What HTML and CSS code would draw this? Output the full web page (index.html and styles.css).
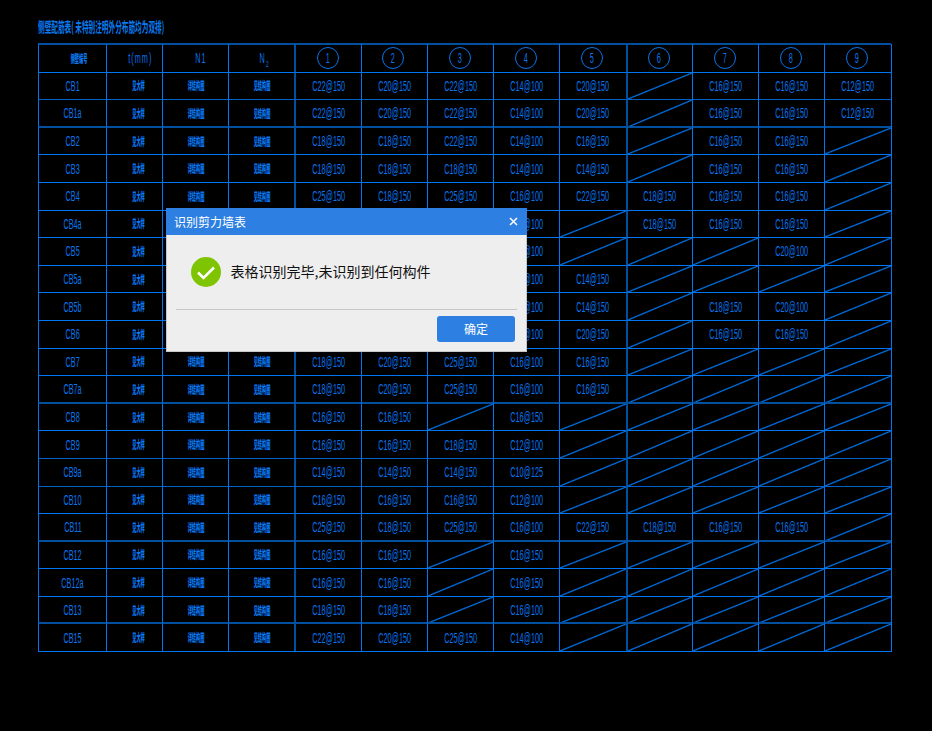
FILE: index.html
```html
<!DOCTYPE html>
<html lang="zh">
<head>
<meta charset="utf-8">
<title>识别剪力墙表</title>
<link rel="stylesheet" href="styles.css">
</head>
<body>
<main class="sheet">
<h1 class="title">侧壁配筋表( 未特别注明外分布筋均为双排)</h1>
<div class="grid">
<div class="row dim"><div class="c"><span class="m head">侧壁编号</span></div><div class="c"><span class="r wide t">t(mm)</span></div><div class="c"><span class="r wide n1">N1</span></div><div class="c"><span class="r wide n2">N<sub>2</sub></span></div><div class="c"><span class="o"><span class="r">1</span></span></div><div class="c"><span class="o"><span class="r">2</span></span></div><div class="c"><span class="o"><span class="r">3</span></span></div><div class="c"><span class="o"><span class="r">4</span></span></div><div class="c"><span class="o"><span class="r">5</span></span></div><div class="c"><span class="o"><span class="r">6</span></span></div><div class="c"><span class="o"><span class="r">7</span></span></div><div class="c"><span class="o"><span class="r">8</span></span></div><div class="c"><span class="o"><span class="r">9</span></span></div></div>
<div class="row"><div class="c"><span class="r">CB1</span></div><div class="c"><span class="m">见大样</span></div><div class="c"><span class="m">详结构图</span></div><div class="c"><span class="m">见结构图</span></div><div class="c"><span class="r">C22@150</span></div><div class="c"><span class="r">C20@150</span></div><div class="c"><span class="r">C22@150</span></div><div class="c"><span class="r">C14@100</span></div><div class="c"><span class="r">C20@150</span></div><div class="c x"></div><div class="c"><span class="r">C16@150</span></div><div class="c"><span class="r">C16@150</span></div><div class="c"><span class="r">C12@150</span></div></div>
<div class="row soft"><div class="c"><span class="r">CB1a</span></div><div class="c"><span class="m">见大样</span></div><div class="c"><span class="m">详结构图</span></div><div class="c"><span class="m">见结构图</span></div><div class="c"><span class="r">C22@150</span></div><div class="c"><span class="r">C20@150</span></div><div class="c"><span class="r">C22@150</span></div><div class="c"><span class="r">C14@100</span></div><div class="c"><span class="r">C20@150</span></div><div class="c x"></div><div class="c"><span class="r">C16@150</span></div><div class="c"><span class="r">C16@150</span></div><div class="c"><span class="r">C12@150</span></div></div>
<div class="row dim"><div class="c"><span class="r">CB2</span></div><div class="c"><span class="m">见大样</span></div><div class="c"><span class="m">详结构图</span></div><div class="c"><span class="m">见结构图</span></div><div class="c"><span class="r">C18@150</span></div><div class="c"><span class="r">C18@150</span></div><div class="c"><span class="r">C22@150</span></div><div class="c"><span class="r">C14@100</span></div><div class="c"><span class="r">C16@150</span></div><div class="c x"></div><div class="c"><span class="r">C16@150</span></div><div class="c"><span class="r">C16@150</span></div><div class="c x"></div></div>
<div class="row"><div class="c"><span class="r">CB3</span></div><div class="c"><span class="m">见大样</span></div><div class="c"><span class="m">详结构图</span></div><div class="c"><span class="m">见结构图</span></div><div class="c"><span class="r">C18@150</span></div><div class="c"><span class="r">C18@150</span></div><div class="c"><span class="r">C18@150</span></div><div class="c"><span class="r">C14@100</span></div><div class="c"><span class="r">C14@150</span></div><div class="c x"></div><div class="c"><span class="r">C16@150</span></div><div class="c"><span class="r">C16@150</span></div><div class="c x"></div></div>
<div class="row"><div class="c"><span class="r">CB4</span></div><div class="c"><span class="m">见大样</span></div><div class="c"><span class="m">详结构图</span></div><div class="c"><span class="m">见结构图</span></div><div class="c"><span class="r">C25@150</span></div><div class="c"><span class="r">C18@150</span></div><div class="c"><span class="r">C25@150</span></div><div class="c"><span class="r">C16@100</span></div><div class="c"><span class="r">C22@150</span></div><div class="c"><span class="r">C18@150</span></div><div class="c"><span class="r">C16@150</span></div><div class="c"><span class="r">C16@150</span></div><div class="c x"></div></div>
<div class="row"><div class="c"><span class="r">CB4a</span></div><div class="c"><span class="m">见大样</span></div><div class="c"></div><div class="c"></div><div class="c"></div><div class="c"></div><div class="c"></div><div class="c"><span class="r">C16@100</span></div><div class="c x"></div><div class="c"><span class="r">C18@150</span></div><div class="c"><span class="r">C16@150</span></div><div class="c"><span class="r">C16@150</span></div><div class="c x"></div></div>
<div class="row"><div class="c"><span class="r">CB5</span></div><div class="c"><span class="m">见大样</span></div><div class="c"></div><div class="c"></div><div class="c"></div><div class="c"></div><div class="c"></div><div class="c"><span class="r">C16@100</span></div><div class="c x"></div><div class="c x"></div><div class="c x"></div><div class="c"><span class="r">C20@100</span></div><div class="c x"></div></div>
<div class="row"><div class="c"><span class="r">CB5a</span></div><div class="c"><span class="m">见大样</span></div><div class="c"></div><div class="c"></div><div class="c"></div><div class="c"></div><div class="c"></div><div class="c"><span class="r">C16@100</span></div><div class="c"><span class="r">C14@150</span></div><div class="c x"></div><div class="c x"></div><div class="c x"></div><div class="c x"></div></div>
<div class="row"><div class="c"><span class="r">CB5b</span></div><div class="c"><span class="m">见大样</span></div><div class="c"></div><div class="c"></div><div class="c"></div><div class="c"></div><div class="c"></div><div class="c"><span class="r">C16@100</span></div><div class="c"><span class="r">C14@150</span></div><div class="c x"></div><div class="c"><span class="r">C18@150</span></div><div class="c"><span class="r">C20@100</span></div><div class="c x"></div></div>
<div class="row"><div class="c"><span class="r">CB6</span></div><div class="c"><span class="m">见大样</span></div><div class="c"></div><div class="c"></div><div class="c"></div><div class="c"></div><div class="c"></div><div class="c"><span class="r">C16@100</span></div><div class="c"><span class="r">C20@150</span></div><div class="c x"></div><div class="c"><span class="r">C16@150</span></div><div class="c"><span class="r">C16@150</span></div><div class="c x"></div></div>
<div class="row"><div class="c"><span class="r">CB7</span></div><div class="c"><span class="m">见大样</span></div><div class="c"><span class="m">详结构图</span></div><div class="c"><span class="m">见结构图</span></div><div class="c"><span class="r">C18@150</span></div><div class="c"><span class="r">C20@150</span></div><div class="c"><span class="r">C25@150</span></div><div class="c"><span class="r">C16@100</span></div><div class="c"><span class="r">C16@150</span></div><div class="c x"></div><div class="c x"></div><div class="c x"></div><div class="c x"></div></div>
<div class="row"><div class="c"><span class="r">CB7a</span></div><div class="c"><span class="m">见大样</span></div><div class="c"><span class="m">详结构图</span></div><div class="c"><span class="m">见结构图</span></div><div class="c"><span class="r">C18@150</span></div><div class="c"><span class="r">C20@150</span></div><div class="c"><span class="r">C25@150</span></div><div class="c"><span class="r">C16@100</span></div><div class="c"><span class="r">C16@150</span></div><div class="c x"></div><div class="c x"></div><div class="c x"></div><div class="c x"></div></div>
<div class="row dim"><div class="c"><span class="r">CB8</span></div><div class="c"><span class="m">见大样</span></div><div class="c"><span class="m">详结构图</span></div><div class="c"><span class="m">见结构图</span></div><div class="c"><span class="r">C16@150</span></div><div class="c"><span class="r">C16@150</span></div><div class="c x"></div><div class="c"><span class="r">C16@150</span></div><div class="c x"></div><div class="c x"></div><div class="c x"></div><div class="c x"></div><div class="c x"></div></div>
<div class="row"><div class="c"><span class="r">CB9</span></div><div class="c"><span class="m">见大样</span></div><div class="c"><span class="m">详结构图</span></div><div class="c"><span class="m">见结构图</span></div><div class="c"><span class="r">C16@150</span></div><div class="c"><span class="r">C16@150</span></div><div class="c"><span class="r">C18@150</span></div><div class="c"><span class="r">C12@100</span></div><div class="c x"></div><div class="c x"></div><div class="c x"></div><div class="c x"></div><div class="c x"></div></div>
<div class="row soft"><div class="c"><span class="r">CB9a</span></div><div class="c"><span class="m">见大样</span></div><div class="c"><span class="m">详结构图</span></div><div class="c"><span class="m">见结构图</span></div><div class="c"><span class="r">C14@150</span></div><div class="c"><span class="r">C14@150</span></div><div class="c"><span class="r">C14@150</span></div><div class="c"><span class="r">C10@125</span></div><div class="c x"></div><div class="c x"></div><div class="c x"></div><div class="c x"></div><div class="c x"></div></div>
<div class="row soft"><div class="c"><span class="r">CB10</span></div><div class="c"><span class="m">见大样</span></div><div class="c"><span class="m">详结构图</span></div><div class="c"><span class="m">见结构图</span></div><div class="c"><span class="r">C16@150</span></div><div class="c"><span class="r">C16@150</span></div><div class="c"><span class="r">C16@150</span></div><div class="c"><span class="r">C12@100</span></div><div class="c x"></div><div class="c x"></div><div class="c x"></div><div class="c x"></div><div class="c x"></div></div>
<div class="row"><div class="c"><span class="r">CB11</span></div><div class="c"><span class="m">见大样</span></div><div class="c"><span class="m">详结构图</span></div><div class="c"><span class="m">见结构图</span></div><div class="c"><span class="r">C25@150</span></div><div class="c"><span class="r">C18@150</span></div><div class="c"><span class="r">C25@150</span></div><div class="c"><span class="r">C16@100</span></div><div class="c"><span class="r">C22@150</span></div><div class="c"><span class="r">C18@150</span></div><div class="c"><span class="r">C16@150</span></div><div class="c"><span class="r">C16@150</span></div><div class="c x"></div></div>
<div class="row dim"><div class="c"><span class="r">CB12</span></div><div class="c"><span class="m">见大样</span></div><div class="c"><span class="m">详结构图</span></div><div class="c"><span class="m">见结构图</span></div><div class="c"><span class="r">C16@150</span></div><div class="c"><span class="r">C16@150</span></div><div class="c x"></div><div class="c"><span class="r">C16@150</span></div><div class="c x"></div><div class="c x"></div><div class="c x"></div><div class="c x"></div><div class="c x"></div></div>
<div class="row"><div class="c"><span class="r">CB12a</span></div><div class="c"><span class="m">见大样</span></div><div class="c"><span class="m">详结构图</span></div><div class="c"><span class="m">见结构图</span></div><div class="c"><span class="r">C16@150</span></div><div class="c"><span class="r">C16@150</span></div><div class="c x"></div><div class="c"><span class="r">C16@150</span></div><div class="c x"></div><div class="c x"></div><div class="c x"></div><div class="c x"></div><div class="c x"></div></div>
<div class="row"><div class="c"><span class="r">CB13</span></div><div class="c"><span class="m">见大样</span></div><div class="c"><span class="m">详结构图</span></div><div class="c"><span class="m">见结构图</span></div><div class="c"><span class="r">C18@150</span></div><div class="c"><span class="r">C18@150</span></div><div class="c x"></div><div class="c"><span class="r">C16@100</span></div><div class="c x"></div><div class="c x"></div><div class="c x"></div><div class="c x"></div><div class="c x"></div></div>
<div class="row dim"><div class="c"><span class="r">CB15</span></div><div class="c"><span class="m">见大样</span></div><div class="c"><span class="m">详结构图</span></div><div class="c"><span class="m">见结构图</span></div><div class="c"><span class="r">C22@150</span></div><div class="c"><span class="r">C20@150</span></div><div class="c"><span class="r">C25@150</span></div><div class="c"><span class="r">C14@100</span></div><div class="c x"></div><div class="c x"></div><div class="c x"></div><div class="c x"></div><div class="c x"></div></div>
</div>
</main>
<section class="dialog" role="dialog" aria-label="识别剪力墙表">
<header class="dialog-head">
<span class="dialog-title">识别剪力墙表</span>
<svg class="close" width="9" height="9" viewBox="0 0 9 9" aria-hidden="true"><path d="M1 1 8 8M8 1 1 8"/></svg>
</header>
<div class="dialog-body">
<svg class="ok" width="30" height="30" viewBox="0 0 30 30" aria-hidden="true"><circle cx="15" cy="15" r="15"/><path d="M7 15.500 12.500 21 23 10.500"/></svg>
<p class="msg">表格识别完毕,未识别到任何构件</p>
</div>
<div class="dialog-foot">
<button class="btn" type="button">确定</button>
</div>
</section>
</body>
</html>
```

FILE: styles.css
```css
* { box-sizing: border-box; }
html, body { margin: 0; height: 100%; background: #000; }
body { position: relative; overflow: hidden; }

.sheet { padding: 18px 0 0 38px; }

.title {
  margin: 0 0 9px;
  height: 17px;
  font: 700 14px/17px "Noto Sans CJK SC", sans-serif;
  color: #0a7cf2;
  white-space: nowrap;
  transform: scaleX(.475);
  transform-origin: left center;
}

.grid {
  display: grid;
  width: 853.500px;
  grid-template-columns: 68px 56px 66.200px repeat(10, 66.250px);
  grid-template-rows: repeat(22, 27.600px);
  border-right: 1px solid #0076f0;
  border-bottom: 1px solid #0076f0;
}
.row { display: contents; }

.c {
  display: flex;
  align-items: center;
  justify-content: center;
  min-width: 0;
  border-left: 1px solid #0076f0;
  border-top: 1px solid #0076f0;
  overflow: hidden;
}
.c:nth-child(5), .c:nth-child(10) { border-left: 2px solid #00509f; }
.row.dim > .c { margin-top: -1px; border-top: 2px solid #00509f; }
.row.soft > .c { border-top-color: #0062c8; }

.x {
  background: linear-gradient(to bottom right,
    transparent calc(50% - 1.200px), #0076f0 50%, transparent calc(50% + 1.200px));
}

.r {
  display: inline-block;
  font: 14px/16px "Liberation Sans", sans-serif;
  color: #0a74ea;
  white-space: nowrap;
  transform: scaleX(.52);
}
.r sub { font-size: 9px; line-height: 0; }
.r.wide { letter-spacing: 2px; }
.r.t { margin-left: 12px; }
.r.n1 { margin-left: 10px; }
.r.n2 { margin-left: 5px; }

.m {
  display: inline-block;
  font: 900 11px/13px "Noto Sans CJK SC", sans-serif;
  color: #0a78f0;
  white-space: nowrap;
  transform: scaleX(.38);
}
.m.head { margin-left: 12px; transform: scaleX(.38); }
.c:nth-child(2) .m { margin-left: 8px; }

.o {
  display: flex;
  align-items: center;
  justify-content: center;
  width: 22px;
  height: 22px;
  margin-right: 2px;
  border: 1px solid #0a74ea;
  border-radius: 50%;
}

.dialog {
  position: absolute;
  left: 166px;
  top: 208px;
  display: flex;
  flex-direction: column;
  width: 361px;
  height: 144px;
  background: #eee;
  border: 1px solid #c6c6c6;
  border-top: 0;
  font-family: "Noto Sans CJK SC", sans-serif;
}
.dialog-head {
  display: flex;
  align-items: center;
  justify-content: space-between;
  height: 27px;
  margin: 0 -1px;
  padding: 0 9px 0 8px;
  background: #2d80e2;
}
.dialog-title { font-size: 12px; line-height: 16px; color: #fff; }
.close { fill: none; stroke: #fff; stroke-width: 1.500; }

.dialog-body {
  display: flex;
  align-items: center;
  gap: 10px;
  height: 75px;
  margin: 0 9px;
  padding: 0 0 1px 15px;
  border-bottom: 1px solid #c8c8c8;
}
.ok circle { fill: #7fc400; }
.ok path { fill: none; stroke: #fff; stroke-width: 2.500; }
.msg { margin: 0 0 2px -0.500px; font-size: 14px; line-height: 20px; color: #111; white-space: nowrap; }

.dialog-foot {
  display: flex;
  justify-content: flex-end;
  padding: 6px 11px 0 0;
}
.btn {
  width: 78px;
  height: 26px;
  padding: 0;
  border: 0;
  border-radius: 3px;
  background: #2d80e2;
  color: #fff;
  font: 12px/16px "Noto Sans CJK SC", sans-serif;
}
```
